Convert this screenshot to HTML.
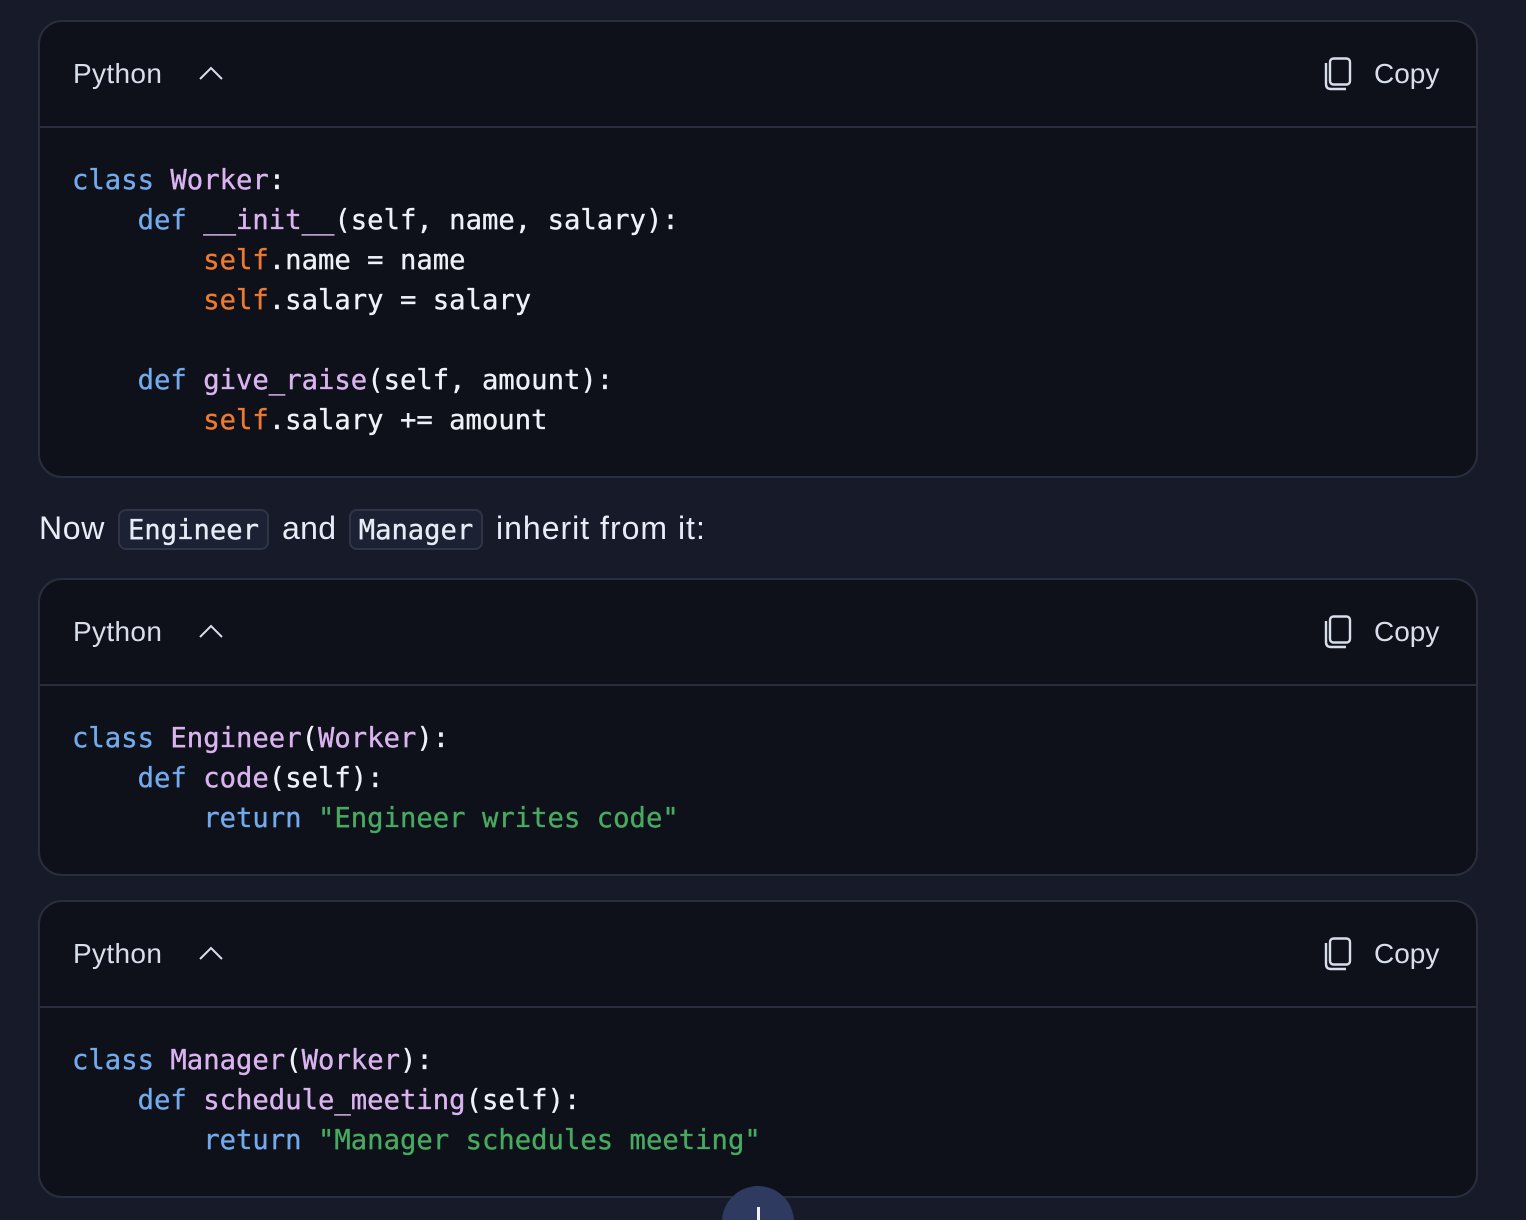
<!DOCTYPE html>
<html><head><meta charset="utf-8"><style>
html,body{margin:0;padding:0;width:1526px;height:1220px;overflow:hidden;background:#171b29}
body{position:relative;font-family:"Liberation Sans",sans-serif}
.card{position:absolute;left:38px;width:1436px;background:#0e1119;border:2px solid #2a2d3d;border-radius:24px;box-sizing:content-box}
.hd{position:absolute;left:0;right:0;top:0;height:104px;border-bottom:2px solid #2a2d3d}
.lbl{position:absolute;left:33px;top:34px;font-size:28px;line-height:36px;color:#d8deeb;letter-spacing:.35px}
.copy{position:absolute;left:1334px;top:34px;font-size:28px;line-height:36px;color:#d8deeb}
.chev{position:absolute;left:158px;top:40px}
.ic{position:absolute;left:1283px;top:34px}
pre{position:absolute;left:32px;top:139px;margin:0;font-family:"DejaVu Sans Mono","Liberation Mono",monospace;font-size:27.2px;letter-spacing:.03px;line-height:40px;color:#eef1f8;-webkit-text-stroke:.35px currentColor}
.k{color:#72aaec}.f{color:#dab4f0}.s{color:#ec7a30}.g{color:#48aa60}
.p{position:absolute;top:508px;font-size:32px;line-height:40px;color:#e8ecf6;white-space:pre;letter-spacing:.7px}
.c{position:absolute;top:509px;height:37px;background:#1c2133;border:2px solid #2f3446;border-radius:8px;font-family:"DejaVu Sans Mono","Liberation Mono",monospace;font-size:27.2px;line-height:39px;color:#e8ecf6;text-align:center;-webkit-text-stroke:.35px currentColor}
</style></head><body>
<div class="card" style="top:20px;height:454px"><div class="hd"><div class="lbl">Python</div><svg class="chev" width="26" height="20" viewBox="0 0 26 20" fill="none" stroke="#d8deeb" stroke-width="2"><path d="M2 17L13 6L24 17"/></svg><svg class="ic" width="32" height="36" viewBox="0 0 32 36" fill="none" stroke="#d8deeb" stroke-width="2.4"><rect x="7" y="2.5" width="20" height="26" rx="3.5"/><path d="M3 7V28Q3 33 8 33H23"/></svg><div class="copy">Copy</div></div>
<pre><span class="k">class</span> <span class="f">Worker</span>:
    <span class="k">def</span> <span class="f">__init__</span>(self, name, salary):
        <span class="s">self</span>.name = name
        <span class="s">self</span>.salary = salary

    <span class="k">def</span> <span class="f">give_raise</span>(self, amount):
        <span class="s">self</span>.salary += amount</pre></div>
<div class="p" style="left:39px">Now</div>
<div class="c" style="left:118px;width:147px">Engineer</div>
<div class="p" style="left:282px;letter-spacing:.35px">and</div>
<div class="c" style="left:349px;width:130px">Manager</div>
<div class="p" style="left:496px;letter-spacing:1px">inherit from it:</div>
<div class="card" style="top:578px;height:294px"><div class="hd"><div class="lbl">Python</div><svg class="chev" width="26" height="20" viewBox="0 0 26 20" fill="none" stroke="#d8deeb" stroke-width="2"><path d="M2 17L13 6L24 17"/></svg><svg class="ic" width="32" height="36" viewBox="0 0 32 36" fill="none" stroke="#d8deeb" stroke-width="2.4"><rect x="7" y="2.5" width="20" height="26" rx="3.5"/><path d="M3 7V28Q3 33 8 33H23"/></svg><div class="copy">Copy</div></div>
<pre><span class="k">class</span> <span class="f">Engineer</span>(<span class="f">Worker</span>):
    <span class="k">def</span> <span class="f">code</span>(self):
        <span class="k">return</span> <span class="g">"Engineer writes code"</span></pre></div>
<div class="card" style="top:900px;height:294px"><div class="hd"><div class="lbl">Python</div><svg class="chev" width="26" height="20" viewBox="0 0 26 20" fill="none" stroke="#d8deeb" stroke-width="2"><path d="M2 17L13 6L24 17"/></svg><svg class="ic" width="32" height="36" viewBox="0 0 32 36" fill="none" stroke="#d8deeb" stroke-width="2.4"><rect x="7" y="2.5" width="20" height="26" rx="3.5"/><path d="M3 7V28Q3 33 8 33H23"/></svg><div class="copy">Copy</div></div>
<pre><span class="k">class</span> <span class="f">Manager</span>(<span class="f">Worker</span>):
    <span class="k">def</span> <span class="f">schedule_meeting</span>(self):
        <span class="k">return</span> <span class="g">"Manager schedules meeting"</span></pre></div>
<div style="position:absolute;left:722px;top:1186px;width:72px;height:72px;border-radius:50%;background:#2e3a60"></div>
<div style="position:absolute;left:757px;top:1207px;width:3px;height:13px;background:#f0f2f8"></div>
</body></html>
